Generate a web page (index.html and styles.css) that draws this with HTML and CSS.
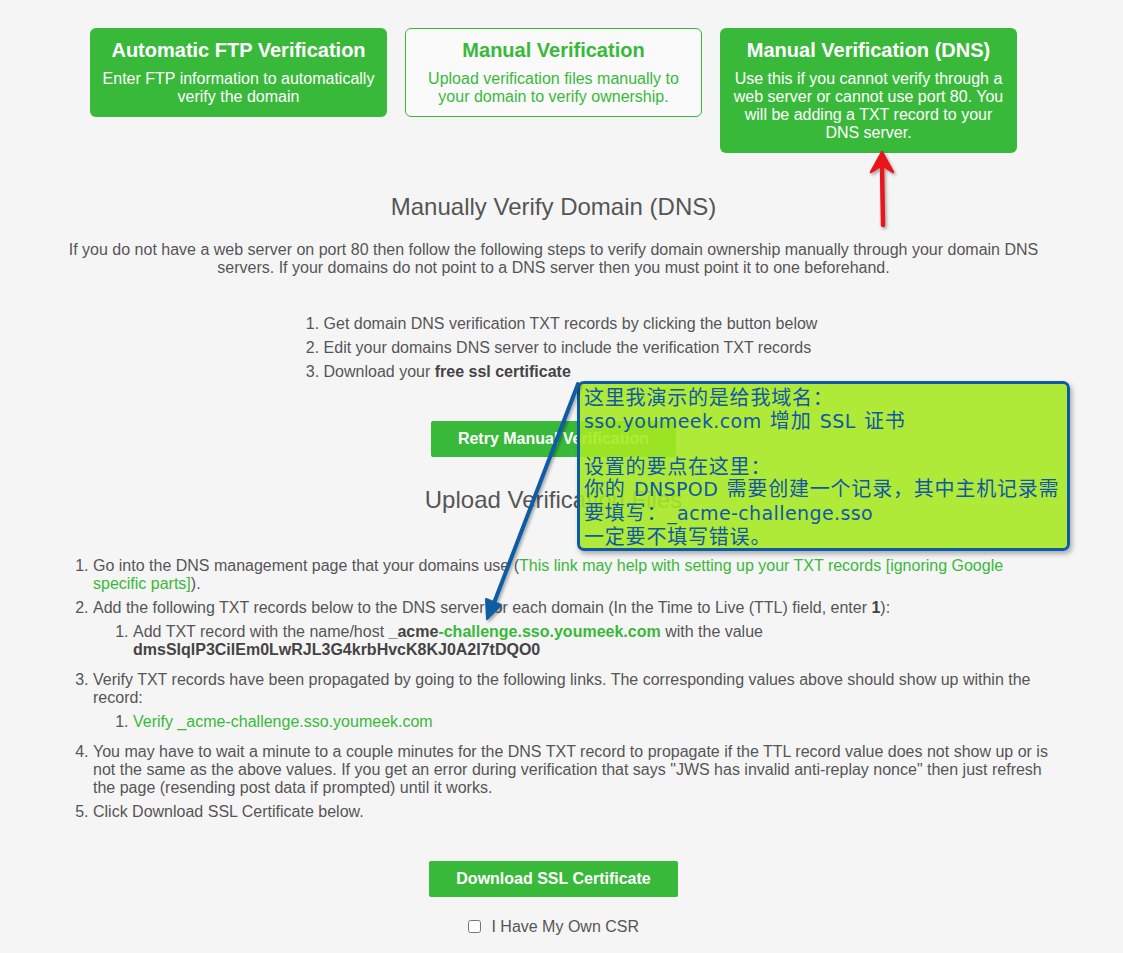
FILE: index.html
```html
<!DOCTYPE html>
<html lang="en">
<head>
<meta charset="utf-8">
<title>Manually Verify Domain (DNS)</title>
<link rel="stylesheet" href="styles.css">
</head>
<body>
<div class="page">
  <div class="methods">
    <div class="method method-solid">
      <div class="method-title">Automatic FTP Verification</div>
      <div class="method-desc">Enter FTP information to automatically verify the domain</div>
    </div>
    <div class="method method-outline">
      <div class="method-title">Manual Verification</div>
      <div class="method-desc">Upload verification files manually to your domain to verify ownership.</div>
    </div>
    <div class="method method-solid">
      <div class="method-title">Manual Verification (DNS)</div>
      <div class="method-desc">Use this if you cannot verify through a web server or cannot use port 80. You will be adding a TXT record to your DNS server.</div>
    </div>
  </div>

  <h2 class="heading heading-first">Manually Verify Domain (DNS)</h2>
  <p class="intro">If you do not have a web server on port 80 then follow the following steps to verify domain ownership manually through your domain DNS servers. If your domains do not point to a DNS server then you must point it to one beforehand.</p>

  <ol class="steps">
    <li>Get domain DNS verification TXT records by clicking the button below</li>
    <li>Edit your domains DNS server to include the verification TXT records</li>
    <li>Download your <strong>free ssl certificate</strong></li>
  </ol>

  <div class="btn-row btn-row-retry">
    <button class="btn">Retry Manual Verification</button>
  </div>

  <h2 class="heading heading-second">Upload Verification Files</h2>

  <div class="details">
    <ol class="detail-list">
      <li>Go into the DNS management page that your domains use (<a class="link" href="#">This link may help with setting up your TXT records [ignoring Google specific parts]</a>).</li>
      <li>Add the following TXT records below to the DNS server for each domain (In the Time to Live (TTL) field, enter <strong>1</strong>):
        <ol class="sub-list">
          <li>Add TXT record with the name/host <strong>_acme<span class="green">-challenge.sso.youmeek.com</span></strong> with the value <strong>dmsSlqlP3CilEm0LwRJL3G4krbHvcK8KJ0A2I7tDQO0</strong></li>
        </ol>
      </li>
      <li>Verify TXT records have been propagated by going to the following links. The corresponding values above should show up within the record:
        <ol class="sub-list">
          <li><a class="link" href="#">Verify _acme-challenge.sso.youmeek.com</a></li>
        </ol>
      </li>
      <li>You may have to wait a minute to a couple minutes for the DNS TXT record to propagate if the TTL record value does not show up or is not the same as the above values. If you get an error during verification that says "JWS has invalid anti-replay nonce" then just refresh the page (resending post data if prompted) until it works.</li>
      <li>Click Download SSL Certificate below.</li>
    </ol>
  </div>

  <div class="btn-row btn-row-download">
    <button class="btn">Download SSL Certificate</button>
  </div>

  <div class="csr-row">
    <label class="csr"><input type="checkbox" class="csr-box"> I Have My Own CSR</label>
  </div>
</div>

<div class="callout">这里我演示的是给我域名：<br><span class="latin">sso.youmeek.com</span> 增加 <span class="latin">SSL</span> 证书<br><br>设置的要点在这里：<br>你的 <span class="latin">DNSPOD</span> 需要创建一个记录，其中主机记录需<br>要填写：<span class="latin">_acme-challenge.sso</span><br>一定要不填写错误。</div>

<svg class="annotations" width="1123" height="953" viewBox="0 0 1123 953" xmlns="http://www.w3.org/2000/svg">
  <defs>
    <filter id="shadow" x="-20%" y="-20%" width="140%" height="140%">
      <feDropShadow dx="1.5" dy="2" stdDeviation="1.5" flood-color="#000" flood-opacity="0.35"/>
    </filter>
  </defs>
  <g filter="url(#shadow)">
    <line x1="578" y1="384" x2="494" y2="603" stroke="#0b5ca4" stroke-width="4" stroke-linecap="round"/>
    <polygon points="487,619 501,605 486,599" fill="#0b5ca4" stroke="#0b5ca4" stroke-width="2" stroke-linejoin="round"/>
  </g>
  <g filter="url(#shadow)">
    <line x1="883" y1="225" x2="882" y2="164" stroke="#e8141c" stroke-width="4.5" stroke-linecap="round"/>
    <polygon points="882,152 893,172 882,165 871,172" fill="#e8141c" stroke="#e8141c" stroke-width="2.5" stroke-linejoin="round"/>
  </g>
</svg>
</body>
</html>
```

FILE: styles.css
```css
html, body {
  margin: 0;
  padding: 0;
}

body {
  background: #f5f5f5;
  font-family: "Liberation Sans", Arial, sans-serif;
  font-size: 16px;
  color: #555;
  position: relative;
  min-height: 953px;
}

.page {
  width: 1107px;
  padding-top: 28px;
}

.methods {
  display: flex;
  justify-content: center;
  align-items: flex-start;
  gap: 18px;
}

.method {
  width: 297px;
  box-sizing: border-box;
  border-radius: 6px;
  padding: 10px 10px 11px;
  text-align: center;
}

.method-solid {
  background: #39b93a;
  color: #fff;
}

.method-outline {
  background: #fafafa;
  border: 1px solid #39b93a;
  color: #39b93a;
  padding: 9px 9px 10px;
}

.method-title {
  font-size: 20px;
  font-weight: bold;
  line-height: 24px;
}

.method-desc {
  margin-top: 8px;
  font-size: 16px;
  line-height: 18px;
}

.heading {
  font-size: 24px;
  font-weight: normal;
  line-height: 28px;
  text-align: center;
  color: #555;
  margin: 0;
}

.heading-first {
  margin-top: 40px;
}

.intro {
  width: 990px;
  margin: 20px auto 0;
  text-align: center;
  line-height: 18px;
}

.steps {
  display: table;
  margin: 35px auto 0;
  padding-left: 34px;
  line-height: 24px;
}

.steps strong {
  color: #444;
}

.btn-row {
  display: flex;
  justify-content: center;
}

.btn-row-retry {
  margin-top: 37px;
}

.btn {
  font-family: "Liberation Sans", Arial, sans-serif;
  font-size: 16px;
  font-weight: bold;
  color: #fff;
  background: #39b93a;
  border: none;
  border-radius: 2px;
  height: 36px;
  padding: 0 27px;
  line-height: 36px;
}

.heading-second {
  margin-top: 29px;
}

.details {
  padding: 0 52px 0 53px;
  margin-top: 43px;
}

.detail-list {
  margin: 0;
  padding-left: 40px;
  line-height: 18px;
}

.detail-list > li {
  padding-bottom: 6px;
}

.sub-list {
  margin: 6px 0 0;
  padding-left: 40px;
}

.sub-list > li {
  padding-bottom: 6px;
}

.detail-list strong {
  color: #444;
}

.link, .green {
  color: #39b93a;
  text-decoration: none;
}

.btn-row-download {
  margin-top: 34px;
}

.csr-row {
  margin-top: 20px;
  text-align: center;
  line-height: 20px;
}

.csr {
  color: #555;
}

.csr-box {
  width: 13px;
  height: 13px;
  margin: 0 6px 0 0;
  vertical-align: -1px;
}

.callout {
  position: absolute;
  left: 577px;
  top: 381px;
  width: 493px;
  height: 170px;
  box-sizing: border-box;
  border: 3px solid #0b5ca4;
  border-radius: 7px;
  background: rgba(166, 233, 34, 0.9);
  box-shadow: 2px 3px 5px rgba(0, 0, 0, 0.3);
  padding: 2px 4px 0;
  font-family: "Noto Sans CJK SC", sans-serif;
  font-size: 20px;
  letter-spacing: 0.8px;
  word-spacing: 3px;
  line-height: 22.6px;
  color: #1158a6;
  white-space: nowrap;
}

.latin {
  font-family: "DejaVu Sans", sans-serif;
  font-size: 19px;
  letter-spacing: 0.4px;
}

.annotations {
  position: absolute;
  left: 0;
  top: 0;
  pointer-events: none;
}
```
